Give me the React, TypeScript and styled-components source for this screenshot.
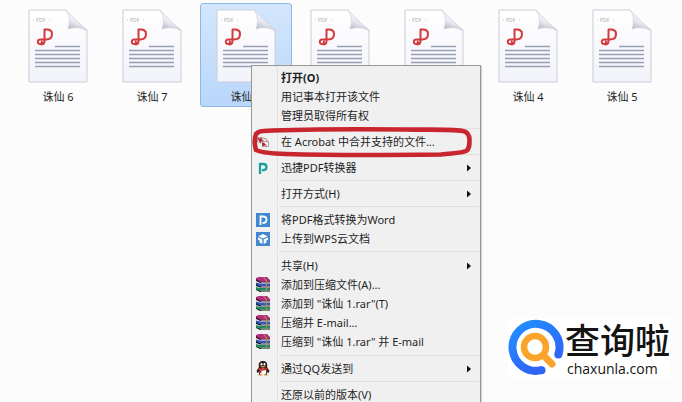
import React from "react";
import styled, { createGlobalStyle } from "styled-components";

const GlobalStyle = createGlobalStyle`
  *, *::before, *::after { box-sizing: border-box; }
  html, body { margin: 0; }
  body {
    background: #fcfcfc;
    color: #1e1e1e;
    font-family: "Noto Sans", "Noto Sans CJK SC", sans-serif;
    font-size: 11px;
    overflow: hidden;
  }
`;

const Desktop = styled.main`
  position: relative;
  min-height: 100vh;
  overflow: hidden;
`;

const FileGrid = styled.div`
  display: grid;
  grid-template-columns: repeat(auto-fill, 92px);
  column-gap: 2px;
  padding: 3px 0 0 12px;
`;

const FileTile = styled.button<{ $selected?: boolean }>`
  display: flex;
  flex-direction: column;
  align-items: center;
  gap: 6px;
  height: 104px;
  padding: 5px 0 0;
  border: 1px solid ${(p) => (p.$selected ? "#8db8e6" : "transparent")};
  border-radius: 3px;
  background: ${(p) => (p.$selected ? "linear-gradient(#d3e6fc, #b9d7fb)" : "transparent")};
  color: inherit;
  font: inherit;
  line-height: 16px;
`;

const ContextMenu = styled.div`
  position: absolute;
  top: 65px;
  left: 251px;
  width: 230px;
  padding: 2px 1px;
  border: 1px solid #979797;
  background: linear-gradient(90deg, #f1f1f1 25px, #e0e0e0 25px, #e0e0e0 26px, #fafafa 26px, #f0f0f0 27px);
  box-shadow: 1px 1px 1px #d4d4d4;
`;

const MenuGroup = styled.div<{ $roomy?: boolean }>`
  display: flex;
  flex-direction: column;
  padding: ${(p) => (p.$roomy ? "4px" : "3px")} 0;

  &:first-child { padding-top: 0; }
`;

const Divider = styled.hr`
  height: 1px;
  margin: 0 0 0 26px;
  border: 0;
  background: #dfdfdf;
`;

const MenuItem = styled.button<{ $strong?: boolean }>`
  display: grid;
  grid-template-columns: 16px 1fr 8px;
  column-gap: 10px;
  align-items: center;
  height: 19px;
  padding: 0 4px 0 2px;
  border: 0;
  background: none;
  color: inherit;
  font: inherit;
  font-weight: ${(p) => (p.$strong ? 700 : 400)};
  line-height: 19px;
  text-align: left;
  white-space: nowrap;
`;

const IconSlot = styled.span`
  display: flex;
  justify-content: center;
`;

const Annotation = styled.svg`
  position: absolute;
  top: 125px;
  left: 250px;
  pointer-events: none;
`;

const Watermark = styled.a`
  position: absolute;
  right: 12px;
  bottom: 24px;
  display: flex;
  align-items: center;
  gap: 1px;
  background: #fff;
  color: #141414;
  text-decoration: none;
`;

const Brand = styled.span`
  display: flex;
  flex-direction: column;
`;

const BrandName = styled.span`
  font: 500 35px/42px "Noto Sans CJK SC", sans-serif;
`;

const BrandSite = styled.span`
  padding-left: 2px;
  font: 500 14px/18px "Open Sans", sans-serif;
`;

function PdfFile() {
  return (
    <svg width="60" height="74" viewBox="0 0 60 74" aria-hidden="true">
      <defs>
        <linearGradient id="paper" x1="0" y1="0" x2="0" y2="1">
          <stop offset="0" stopColor="#ffffff" />
          <stop offset="1" stopColor="#f2f2fa" />
        </linearGradient>
        <linearGradient id="fold" x1="0.65" y1="0.25" x2="0.35" y2="1">
          <stop offset="0" stopColor="#f8f8fc" />
          <stop offset="0.5" stopColor="#e6e7ef" />
          <stop offset="1" stopColor="#b4b7c4" />
        </linearGradient>
      </defs>
      <path d="M1 1H38C43 7 51 15 59 21V73H1Z" fill="url(#paper)" stroke="#cbccd8" />
      <path d="M38 1C42 7 42 14 40 20C46 18 53 18 59 22C52 15 45 8 38 1Z" fill="url(#fold)" stroke="#cfd0da" strokeWidth=".6" />
      <text x="8" y="13" fontFamily="Open Sans, sans-serif" fontSize="5" fill="#aaaaae">PDF</text>
      <path d="M5 11H6M21 11H22" stroke="#c5c5c9" />
      <path
        d="M16.500 24V20.500H19C22.500 20.500 24 22.500 24 25C24 28.500 21.500 30.500 18 30.500H12.500C9 30.500 9 35 12 35C14.500 35 14.500 32.500 13 32.500M16.500 24V32C16.500 34.500 15.500 35.500 13 35.500"
        fill="none"
        stroke="#d33a3d"
        strokeWidth="2"
        strokeLinejoin="round"
      />
      <path d="M27 37.500H52M7 41.500H52M7 45.500H52M7 49.500H52M7 53.500H52M7 57.500H52" stroke="#989fb5" strokeWidth="1.7" />
    </svg>
  );
}

function AcrobatIcon() {
  return (
    <svg width="14" height="14" viewBox="0 0 14 14" aria-hidden="true">
      <path d="M1.500 2.500H7V7H1.500ZM6.500 6.500H12.500V11.500H6.500Z" fill="#f6e9ea" stroke="#b89a9c" />
      <path d="M1 3L4 3.500L5.500 2.500L6 5L7.500 6L5 6.500L4.500 9L3 5.500ZM6 8L8 7.500L9 9L11 10.500L8 10.500L6.500 11.500Z" fill="#a62633" />
      <path d="M8 3.500C10 3.500 11 4 11 6" fill="none" stroke="#a8727a" />
    </svg>
  );
}

function ConverterIcon() {
  return (
    <svg width="14" height="14" viewBox="0 0 14 14" aria-hidden="true">
      <path d="M4 13V3H7C9.500 3 10.500 4.200 10.500 6C10.500 8 9.300 9.200 7 9.200H6" fill="none" stroke="#18a29b" strokeWidth="2.300" />
    </svg>
  );
}

function PdfWordIcon() {
  return (
    <svg width="14" height="14" viewBox="0 0 14 14" aria-hidden="true">
      <path d="M0 0H14V14H0Z" fill="#4288d0" />
      <path d="M4.500 12V3.500H7C9.500 3.500 10.500 5 10.500 6.700C10.500 8.700 9 10 6.500 10" fill="none" stroke="#fff" strokeWidth="1.800" />
    </svg>
  );
}

function CloudDocIcon() {
  return (
    <svg width="14" height="14" viewBox="0 0 14 14" aria-hidden="true">
      <path d="M0 0H14V14H0Z" fill="#4288d0" />
      <path d="M7 2L11.500 4.200L7 6.400L2.500 4.200ZM2 5.300L6.300 7.500V12L3.500 10.500V8.500L2 7.500ZM12 5.300L7.700 7.500V12L10.500 10.500V8.500L12 7.500Z" fill="#fff" />
    </svg>
  );
}

function ArchiveIcon() {
  return (
    <svg width="15" height="15" viewBox="0 0 15 15" aria-hidden="true">
      <path d="M0 1L3 0H11L14 3V5H4L0 3Z" fill="#b42a7c" />
      <path d="M0 2L4 4.500H14V6H4L0 4Z" fill="#3b1730" />
      <path d="M5 5.300H14" stroke="#e6d3dc" strokeWidth="0.700" />
      <path d="M0 5.500L4 6.500H14V9H4L0 7.500Z" fill="#3555b4" />
      <path d="M0 7L4 9H14V10.500H4L0 9Z" fill="#171c40" />
      <path d="M5 9.700H14" stroke="#d6dae8" strokeWidth="0.700" />
      <path d="M0 10L4 11H14V13.500H4L0 12Z" fill="#1b8a5c" />
      <path d="M0 12L4 13.500H14V15H4L0 13Z" fill="#0f3323" />
      <path d="M5 14.200H14" stroke="#cfe0d5" strokeWidth="0.700" />
      <path d="M7.500 0L10.500 4V14.500" fill="none" stroke="#b08c42" strokeWidth="1.200" />
    </svg>
  );
}

function PenguinIcon() {
  return (
    <svg width="14" height="15" viewBox="0 0 14 15" aria-hidden="true">
      <path d="M3 6C2 2 4 0 7 0S12 2 11 6L13.500 10L12.500 12L11 11V14H3V11L1.500 12L0.500 10Z" fill="#2b1a1a" />
      <ellipse cx="7" cy="10.800" rx="3.300" ry="3.200" fill="#fff" />
      <ellipse cx="5.500" cy="3.300" rx="1" ry="1.300" fill="#fff" />
      <ellipse cx="8.500" cy="3.300" rx="1" ry="1.300" fill="#fff" />
      <path d="M4 5.500Q7 4.500 10 5.500Q7 7.500 4 5.500ZM1.500 14.500Q4 12 6.500 14.500ZM7.500 14.500Q10 12 12.500 14.500Z" fill="#e9a02c" />
      <path d="M2.500 6.500Q7 9 11.500 6.500V8.500Q8 10 5.500 9.500V12H4V9L2.500 8.500Z" fill="#cf3228" />
    </svg>
  );
}

function SubmenuArrow() {
  return (
    <svg width="5" height="8" viewBox="0 0 5 8" aria-hidden="true">
      <path d="M0 0.500L4 4L0 7.500Z" fill="#111" />
    </svg>
  );
}

function BrandMark() {
  return (
    <svg width="56" height="58" viewBox="0 0 56 58" aria-hidden="true">
      <defs>
        <linearGradient id="ring" x1="0" y1="0" x2="0.6" y2="1">
          <stop offset="0" stopColor="#2090ff" />
          <stop offset="1" stopColor="#2f62f6" />
        </linearGradient>
      </defs>
      <path d="M50.500 35A23.500 23.500 0 1 0 34 51" fill="none" stroke="url(#ring)" strokeWidth="8" />
      <circle cx="50.300" cy="35.500" r="4" fill="#2e68f8" />
      <circle cx="33.500" cy="51.200" r="4" fill="#2e64f7" />
      <path d="M35 36L44 45" stroke="#fba42c" strokeWidth="7" strokeLinecap="round" />
      <circle cx="27" cy="28" r="11" fill="#fff" stroke="#fba42c" strokeWidth="6.500" />
    </svg>
  );
}

type Entry = { label: string; icon?: React.ReactNode; submenu?: boolean; strong?: boolean };

const groups: { roomy?: boolean; entries: Entry[] }[] = [
  { entries: [{ label: "打开(O)", strong: true }, { label: "用记事本打开该文件" }, { label: "管理员取得所有权" }] },
  { entries: [{ label: "在 Acrobat 中合并支持的文件...", icon: <AcrobatIcon /> }] },
  { entries: [{ label: "迅捷PDF转换器", icon: <ConverterIcon />, submenu: true }] },
  { entries: [{ label: "打开方式(H)", submenu: true }] },
  {
    entries: [
      { label: "将PDF格式转换为Word", icon: <PdfWordIcon /> },
      { label: "上传到WPS云文档", icon: <CloudDocIcon /> },
    ],
  },
  {
    roomy: true,
    entries: [
      { label: "共享(H)", submenu: true },
      { label: "添加到压缩文件(A)...", icon: <ArchiveIcon /> },
      { label: '添加到 "诛仙 1.rar"(T)', icon: <ArchiveIcon /> },
      { label: "压缩并 E-mail...", icon: <ArchiveIcon /> },
      { label: '压缩到 "诛仙 1.rar" 并 E-mail', icon: <ArchiveIcon /> },
    ],
  },
  { entries: [{ label: "通过QQ发送到", icon: <PenguinIcon />, submenu: true }] },
  { entries: [{ label: "还原以前的版本(V)" }] },
];

const files = ["诛仙 6", "诛仙 7", "诛仙 1", "诛仙 2", "诛仙 3", "诛仙 4", "诛仙 5"];

export default function App() {
  return (
    <>
      <GlobalStyle />
      <Desktop>
        <FileGrid>
          {files.map((name) => (
            <FileTile key={name} $selected={name === "诛仙 1"}>
              <PdfFile />
              <span>{name}</span>
            </FileTile>
          ))}
        </FileGrid>
        <ContextMenu role="menu">
          {groups.map((group, index) => (
            <React.Fragment key={index}>
              {index > 0 && <Divider />}
              <MenuGroup $roomy={group.roomy} role="group">
                {group.entries.map((entry) => (
                  <MenuItem key={entry.label} role="menuitem" $strong={entry.strong}>
                    <IconSlot>{entry.icon}</IconSlot>
                    <span>{entry.label}</span>
                    {entry.submenu && <SubmenuArrow />}
                  </MenuItem>
                ))}
              </MenuGroup>
            </React.Fragment>
          ))}
        </ContextMenu>
        <Annotation width="224" height="34" viewBox="0 0 224 34" aria-hidden="true">
          <path
            d="M13 6C55 4 108 4 155 4.500C180 5 198 4 213 6C218 7 219.500 10 219.500 15C219.500 20 219.500 24 216 26C212 28 204 28 191 29.500C145 30 70 30 36 29C18 28.500 10 27 6 25C4.500 20 4.500 13 6 9C8 7 10 6 13 6Z"
            fill="none"
            stroke="#c9252f"
            strokeWidth="4.600"
          />
        </Annotation>
        <Watermark href="#">
          <BrandMark />
          <Brand>
            <BrandName>查询啦</BrandName>
            <BrandSite>chaxunla.com</BrandSite>
          </Brand>
        </Watermark>
      </Desktop>
    </>
  );
}
